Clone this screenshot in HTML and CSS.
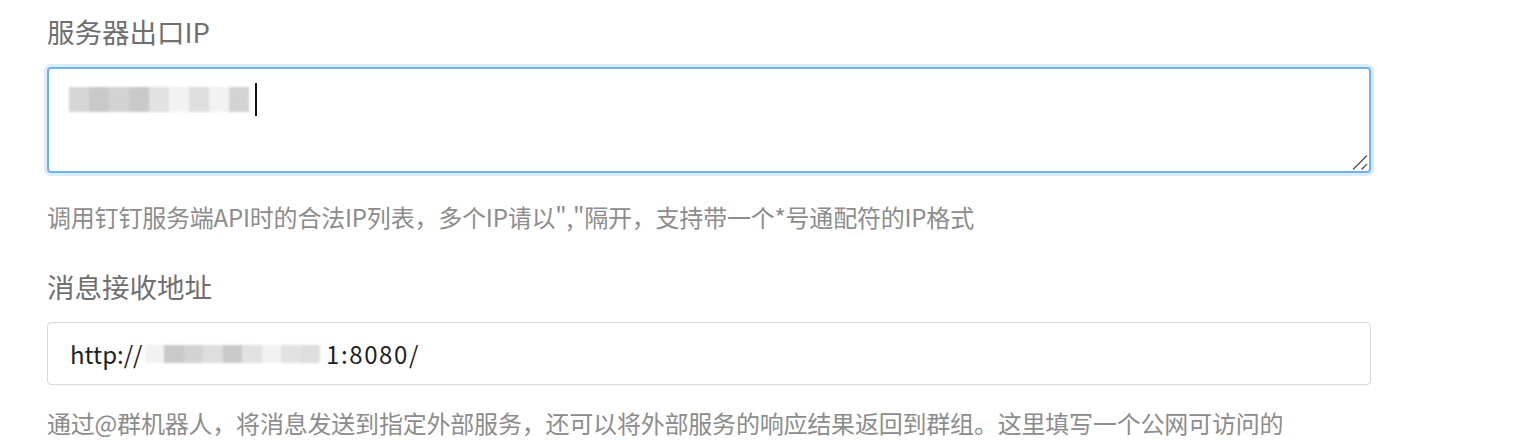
FILE: index.html
```html
<!DOCTYPE html>
<html lang="zh-CN">
<head>
<meta charset="utf-8">
<title>设置</title>
<link rel="stylesheet" href="styles.css">
</head>
<body>
<form class="form">
  <div class="field">
    <label class="label">服务器出口IP</label>
    <div class="textarea">
      <div class="value">
        <span class="mosaic mosaic-ip" aria-label="已打码的IP">
          <i class="c1"></i><i class="c2"></i><i class="c3"></i><i class="c2"></i><i class="c4"></i><i class="c5"></i><i class="c6"></i><i class="c5"></i><i class="c3"></i>
        </span>
        <span class="caret"></span>
      </div>
      <svg class="grip" width="16" height="16" viewBox="0 0 16 16"><path d="M1 15.5 L15 1.5 M9.5 15.5 L15 10" stroke="#555" stroke-width="1.4" fill="none"/></svg>
    </div>
    <p class="help">调用钉钉服务端API时的合法IP列表，多个IP请以","隔开，支持带一个*号通配符的IP格式</p>
  </div>
  <div class="field">
    <label class="label">消息接收地址</label>
    <div class="input">
      <span>http://</span>
      <span class="mosaic mosaic-url" aria-label="已打码的地址">
        <i class="c5"></i><i class="c2"></i><i class="c3"></i><i class="c6"></i><i class="c2"></i><i class="c4"></i><i class="c5"></i><i class="c4"></i><i class="c6"></i>
      </span>
      <span class="port">1:8080/</span>
    </div>
    <p class="help">通过@群机器人，将消息发送到指定外部服务，还可以将外部服务的响应结果返回到群组。这里填写一个公网可访问的</p>
  </div>
</form>
</body>
</html>
```
FILE: styles.css
```css
html, body {
  margin: 0;
  padding: 0;
  background: #fff;
  overflow: hidden;
}
body {
  font-family: "Noto Sans CJK SC", "Noto Sans", sans-serif;
  height: 440px;
}
.form {
  padding: 12px 0 0 47px;
  width: 1324px;
}
.field {
  display: flex;
  flex-direction: column;
}
.label {
  font-size: 27.5px;
  line-height: 38px;
  color: #6f6f6f;
  margin-bottom: 17px;
}
.textarea {
  position: relative;
  height: 106px;
  box-sizing: border-box;
  border: 2px solid #6db1f6;
  border-radius: 4px;
  box-shadow: 0 0 0 3px #dcebfd;
  padding: 13px 20px;
}
.value {
  display: flex;
  align-items: center;
  height: 34px;
}
.mosaic {
  display: inline-flex;
  filter: blur(0.8px);
}
.mosaic i {
  display: block;
  width: 20px;
  height: 24px;
}
.mosaic-ip i {
  height: 25px;
}
.mosaic-url {
  margin: 0 6px 0 2px;
}
.mosaic-url i {
  width: 19.5px;
  height: 18px;
}
.c1 { background: #d6d6d6; }
.c2 { background: #c9c9c9; }
.c3 { background: #d3d3d3; }
.c4 { background: #e2e2e2; }
.c5 { background: #f2f2f2; }
.c6 { background: #dedede; }
.caret {
  width: 2px;
  height: 33px;
  background: #111;
  margin-left: 6px;
}
.grip {
  position: absolute;
  right: 1px;
  bottom: 1px;
}
.help {
  margin: 27px 0 0;
  font-size: 24px;
  line-height: 34px;
  color: #8c8c8c;
  white-space: nowrap;
  letter-spacing: -0.2px;
}
.field + .field {
  margin-top: 33px;
}
.input {
  display: flex;
  align-items: center;
  height: 63px;
  box-sizing: border-box;
  border: 1px solid #d9d9d9;
  border-radius: 4px;
  padding: 0 22px;
  font-size: 24px;
  color: #1f1f1f;
}
.port {
  letter-spacing: 1.6px;
}
.input + .help {
  margin-top: 21px;
}
```
